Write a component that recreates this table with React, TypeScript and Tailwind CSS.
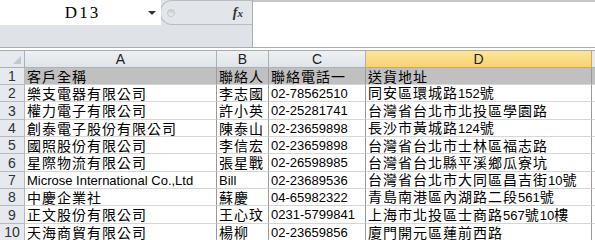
import React from 'react';

const rows: string[][] = [
  ['客戶全稱', '聯絡人', '聯絡電話一', '送貨地址'],
  ['樂支電器有限公司', '李志國', '02-78562510', '同安區環城路152號'],
  ['權力電子有限公司', '許小英', '02-25281741', '台灣省台北市北投區學園路'],
  ['創泰電子股份有限公司', '陳泰山', '02-23659898', '長沙市黃城路124號'],
  ['國照股份有限公司', '李信宏', '02-23659898', '台灣省台北市士林區福志路'],
  ['星際物流有限公司', '張星戰', '02-26598985', '台灣省台北縣平溪鄉瓜寮坑'],
  ['Microse International Co.,Ltd', 'Bill', '02-23689536', '台灣省台北市大同區昌吉街10號'],
  ['中慶企業社', '蘇慶', '04-65982322', '青島南港區內湖路二段561號'],
  ['正文股份有限公司', '王心玟', '0231-5799841', '上海市北投區士商路567號10樓'],
  ['天海商貿有限公司', '楊柳', '02-23659856', '廈門開元區蓮前西路'],
];

const cjk = /([\u2e80-\u9fff\uf900-\ufaff\uff00-\uffef]+)/;

const Mixed = ({ text }: { text: string }) => (
  <>
    {text.split(cjk).filter(Boolean).map((part, i) =>
      cjk.test(part) ? (
        <span key={i} className="text-[14px] leading-[14px] tracking-[1px] font-['Noto_Sans_CJK_TC',sans-serif]">{part}</span>
      ) : (
        <span key={i} className="text-[13px] leading-[14px] font-['Liberation_Sans',Arial,sans-serif]">{part}</span>
      )
    )}
  </>
);

const App = () => {
  return (
    <div className="w-[595px] h-[240px] overflow-hidden bg-white font-['Liberation_Sans',Arial,sans-serif] text-black">
      {/* Name box + formula bar */}
      <div className="flex h-[47px]">
        <div className="w-[253px] flex flex-col bg-[#dfe3e8] border-r border-[#a9b0b8]">
          <div className="flex h-[25px]">
            <div className="w-[161px] bg-white flex items-center relative">
              <span className="flex-1 text-center pl-[4px] text-[17px] tracking-[2px] font-['Liberation_Serif',serif]">D13</span>
              <span className="absolute right-[5px] top-[11px] w-0 h-0 border-l-[4px] border-r-[4px] border-t-[4px] border-l-transparent border-r-transparent border-t-[#333]" />
            </div>
            <div className="flex-1 flex items-center rounded-l-[12px] border-l border-t border-b border-[#b7bdc4] bg-[#e2e5ea] -ml-[1px]">
              <span className="ml-[6px] w-[8px] h-[8px] rounded-full bg-gradient-to-b from-[#c8ccd2] to-[#eceef1] border border-[#c4c8ce]" />
              <span className="ml-auto mr-[9px] italic font-bold text-[14px] text-[#333] font-['Liberation_Serif',serif]">
                f<span className="text-[11px]">x</span>
              </span>
            </div>
          </div>
        </div>
        <div className="flex-1 bg-white border-t-[2px] border-[#c4c8cd]" />
      </div>
      <div className="h-[4px] border-t border-b border-[#a9adb3] bg-white" />

      {/* Sheet */}
      <div className="grid grid-cols-[25px_192px_52px_97px_226px_1fr] grid-rows-[17px_17px_17px_18px_17px_17px_18px_17px_17px_18px_17px]">
        <div className="bg-[#e6e9ed] border-r border-b border-[#a9b1ba] relative">
          <span className="absolute right-[3px] bottom-[3px] w-0 h-0 border-l-[8px] border-l-transparent border-b-[8px] border-b-[#c3c8ce]" />
        </div>
        {['A', 'B', 'C'].map((c) => (
          <div
            key={c}
            className="bg-gradient-to-b from-[#eef0f3] to-[#e0e4e8] border-r border-b border-[#a9b1ba] flex items-center justify-center text-[14px] leading-[14px] text-[#222]"
          >
            {c}
          </div>
        ))}
        <div className="bg-gradient-to-b from-[#fbe59b] to-[#f7d370] border-r border-b border-[#d9a93f] flex items-center justify-center text-[14px] leading-[14px] text-[#222]">
          D
        </div>
        <div className="bg-[#e6e9ed] border-b border-[#a9b1ba]" />

        {rows.map((r, ri) => (
          <React.Fragment key={ri}>
            <div className="bg-[#e6e9ed] border-r border-b border-[#b3bac2] flex items-center justify-center text-[14px] leading-[14px] text-[#333]">
              {ri + 1}
            </div>
            {r.map((cell, ci) => (
              <div
                key={ci}
                className={`border-r border-[#9a9a9a] border-b-[1px] border-b-[#d6d6d6] pl-[2px] flex items-center whitespace-nowrap overflow-hidden ${
                  ri === 0 ? 'bg-[#c0c0c0]' : 'bg-white'
                }`}
              >
                <span className="leading-[14px]">
                  <Mixed text={cell} />
                </span>
              </div>
            ))}
            <div className={`border-b border-[#d6d6d6] ${ri === 0 ? 'bg-[#c0c0c0]' : 'bg-white'}`} />
          </React.Fragment>
        ))}
      </div>
    </div>
  );
};

export default App;
